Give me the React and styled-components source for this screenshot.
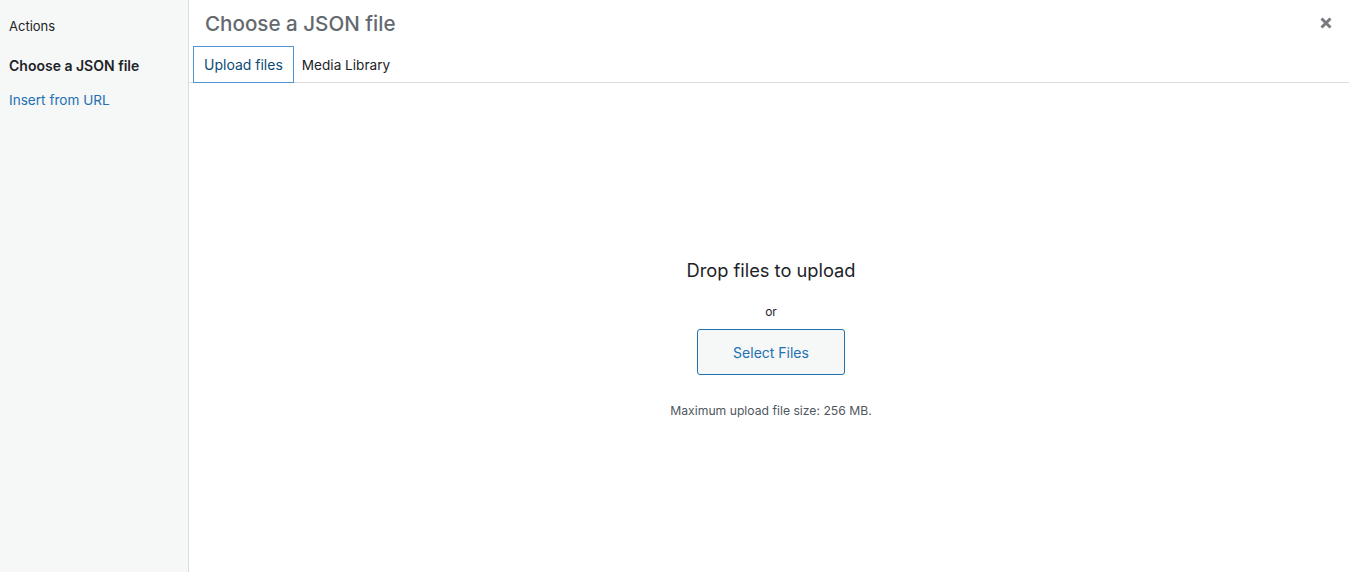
import React from "react";
import styled, { createGlobalStyle } from "styled-components";

const GlobalStyle = createGlobalStyle`
  html, body {
    margin: 0;
    padding: 0;
    height: 100%;
    background: #fff;
    font-family: Inter, "Noto Sans", "Liberation Sans", sans-serif;
  }
  #root {
    height: 100%;
  }
`;

const Frame = styled.div`
  display: flex;
  height: 572px;
  overflow: hidden;
`;

const Sidebar = styled.div`
  width: 189px;
  flex-shrink: 0;
  background: #f6f7f7;
  border-right: 1px solid #dcdcde;
  padding: 18px 9px 0;
  box-sizing: border-box;
  display: flex;
  flex-direction: column;
`;

const SideHeading = styled.div`
  font-size: 13px;
  color: #1d2327;
  line-height: 16px;
  margin-bottom: 23px;
`;

const SideItem = styled.a`
  font-size: ${(p) => (p.active ? "14px" : "13.6px")};
  line-height: 18px;
  margin-bottom: 16px;
  text-decoration: none;
  color: ${(p) => (p.active ? "#1d2327" : "#2271b1")};
  font-weight: ${(p) => (p.active ? 600 : 400)};
`;

const Main = styled.div`
  flex: 1;
  display: flex;
  flex-direction: column;
  min-width: 0;
`;

const TitleBar = styled.div`
  height: 46px;
  display: flex;
  align-items: center;
  justify-content: space-between;
  padding: 0 16px;
`;

const Title = styled.h1`
  margin: 0;
  font-size: 20.6px;
  font-weight: 500;
  color: #646970;
`;

const CloseButton = styled.button`
  border: 0;
  background: none;
  padding: 0;
  width: 14px;
  height: 14px;
  display: flex;
  cursor: pointer;
`;

const Tabs = styled.div`
  display: flex;
  height: 36px;
  padding-left: 4px;
  border-bottom: 1px solid #dcdcde;
`;

const Tab = styled.button`
  background: transparent;
  border: 1px solid ${(p) => (p.active ? "#4f94d4" : "transparent")};
  margin-bottom: -1px;
  padding: ${(p) => (p.active ? "0 10px" : "0 7px")};
  font-family: inherit;
  font-size: ${(p) => (p.active ? "14px" : "13.6px")};
  color: ${(p) => (p.active ? "#0a4b78" : "#1d2327")};
  cursor: pointer;
`;

const DropArea = styled.div`
  flex: 1;
  display: flex;
  flex-direction: column;
  align-items: center;
  padding-top: 175px;
  padding-left: 4px;
`;

const DropTitle = styled.p`
  margin: 0;
  font-size: 18.3px;
  line-height: 24px;
  color: #1d2327;
`;

const Or = styled.p`
  margin: 22px 0 9px;
  font-size: 12px;
  line-height: 16px;
  color: #1d2327;
`;

const SelectButton = styled.button`
  width: 148px;
  height: 46px;
  background: #f6f7f7;
  border: 1px solid #2271b1;
  border-radius: 3px;
  font-family: inherit;
  font-size: 14px;
  color: #2271b1;
  cursor: pointer;
`;

const MaxSize = styled.p`
  margin: 28px 0 0;
  font-size: 12.2px;
  line-height: 16px;
  color: #50575e;
`;

const App = () => {
  return (
    <>
      <GlobalStyle />
      <Frame>
        <Sidebar>
          <SideHeading>Actions</SideHeading>
          <SideItem active href="#">
            Choose a JSON file
          </SideItem>
          <SideItem href="#">Insert from URL</SideItem>
        </Sidebar>
        <Main>
          <TitleBar>
            <Title>Choose a JSON file</Title>
            <CloseButton aria-label="Close">
              <svg width="14" height="14" viewBox="0 0 14 14">
                <path
                  d="M2.5 2.5 L11.5 11.5 M11.5 2.5 L2.5 11.5"
                  stroke="#787c82"
                  strokeWidth="3"
                />
              </svg>
            </CloseButton>
          </TitleBar>
          <Tabs>
            <Tab active>Upload files</Tab>
            <Tab>Media Library</Tab>
          </Tabs>
          <DropArea>
            <DropTitle>Drop files to upload</DropTitle>
            <Or>or</Or>
            <SelectButton>Select Files</SelectButton>
            <MaxSize>Maximum upload file size: 256 MB.</MaxSize>
          </DropArea>
        </Main>
      </Frame>
    </>
  );
};

export default App;
